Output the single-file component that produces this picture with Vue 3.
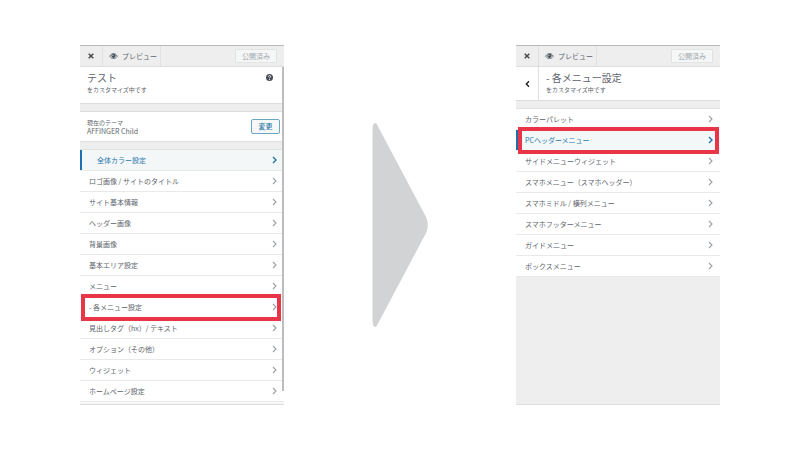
<script setup>
const themeItems = [
  { label: '全体カラー設定', active: true, indent: true },
  { label: 'ロゴ画像 / サイトのタイトル' },
  { label: 'サイト基本情報' },
  { label: 'ヘッダー画像' },
  { label: '背景画像' },
  { label: '基本エリア設定' },
  { label: 'メニュー' },
  { label: '- 各メニュー設定', marked: true },
  { label: '見出しタグ（hx）/ テキスト' },
  { label: 'オプション（その他）' },
  { label: 'ウィジェット' },
  { label: 'ホームページ設定' },
]

const menuItems = [
  { label: 'カラーパレット' },
  { label: 'PCヘッダーメニュー', active: true, marked: true },
  { label: 'サイドメニューウィジェット' },
  { label: 'スマホメニュー（スマホヘッダー）' },
  { label: 'スマホミドル / 横列メニュー' },
  { label: 'スマホフッターメニュー' },
  { label: 'ガイドメニュー' },
  { label: 'ボックスメニュー' },
]

const panels = [
  { id: 'theme', title: 'テスト', items: themeItems, root: true },
  { id: 'menus', title: '- 各メニュー設定', items: menuItems, root: false },
]
</script>

<template>
  <main class="page">
    <section v-for="panel in panels" :key="panel.id" class="panel" :class="panel.id">
      <header class="toolbar">
        <button type="button" class="close" aria-label="閉じる">
          <svg viewBox="0 0 6 6" width="6" height="6"><path d="M.7.7 5.300 5.300M5.300.7.7 5.300" /></svg>
        </button>
        <button type="button" class="preview">
          <svg viewBox="0 0 20 14" width="9" height="6">
            <path class="lid" d="M1 7.500C4 2.800 7 1.200 10 1.200s6 1.600 9 6.300C16 11.600 13 13 10 13S4 11.600 1 7.500Z" />
            <circle class="iris" cx="10" cy="6.500" r="5" />
            <circle class="glint" cx="8.500" cy="5" r="1.600" />
          </svg>
          プレビュー
        </button>
        <button type="button" class="publish" disabled>公開済み</button>
      </header>

      <div class="body">
        <div class="heading">
          <button v-if="!panel.root" type="button" class="back" aria-label="戻る">
            <svg viewBox="0 0 5 8" width="5" height="8"><path d="M4 1.200 1.300 4 4 6.800" /></svg>
          </button>
          <div class="titles">
            <h2>{{ panel.title }}</h2>
            <p>をカスタマイズ中です</p>
          </div>
          <button v-if="panel.root" type="button" class="help" aria-label="ヘルプ">
            <svg viewBox="0 0 14 14" width="7" height="7">
              <circle cx="7" cy="7" r="7" />
              <path d="M4.800 5.300C4.800 2.500 9.300 2.500 9.300 5.200 9.300 6.900 7 6.800 7 8.600M7 10v1.700" />
            </svg>
          </button>
        </div>

        <div v-if="panel.root" class="theme-row">
          <p>現在のテーマ<br /><span class="theme-name">AFFINGER Child</span></p>
          <button type="button" class="change">変更</button>
        </div>

        <ul class="list">
          <li v-for="item in panel.items" :key="item.label" :class="{ marked: item.marked }">
            <a href="#" :class="{ active: item.active, indent: item.indent }">
              <span>{{ item.label }}</span>
              <svg viewBox="0 0 5 8" width="5" height="8"><path d="M1 1 4 4 1 7" /></svg>
            </a>
          </li>
        </ul>
      </div>
    </section>

    <svg class="arrow" viewBox="0 0 56 206" width="56" height="206" aria-hidden="true">
      <path d="M.5 10C.5 3 1.500 1 3 1c1 0 1.600.8 2.500 2.400L53.500 94c3 6 3 12 0 18L5.500 202.600C4.600 204.200 4 205 3 205 1.500 205 .5 203 .5 196Z" />
    </svg>
  </main>
</template>

<style>
body {
  margin: 0;
  background: #fff;
}
</style>

<style scoped>
.page {
  display: grid;
  grid-template-columns: 204fr 232fr 204fr;
  grid-template-areas: "first arrow second";
  padding: 45px 10%;
  color: #5c636b;
  font-family: "Noto Sans CJK JP", "Noto Sans", sans-serif;
  font-size: 7px;
  line-height: 9px;
}

.panel {
  display: flex;
  flex-direction: column;
  min-width: 0;
  background: #eee;
  border-top: 1px solid #b8b8b8;
  border-bottom: 1px solid #ddd;
}

.theme {
  grid-area: first;
}

.menus {
  grid-area: second;
}

.arrow {
  grid-area: arrow;
  align-self: center;
  margin-left: 88px;
  fill: #d1d3d4;
}

button {
  box-sizing: border-box;
  margin: 0;
  padding: 0;
  border: 0;
  background: none;
  color: inherit;
  font: inherit;
}

h2,
p,
ul {
  margin: 0;
  padding: 0;
  font-weight: 400;
}

svg {
  display: block;
  flex: none;
}

.toolbar {
  display: flex;
  align-items: stretch;
  height: 20px;
  border-bottom: 1px solid #ddd;
}

.close {
  display: flex;
  align-items: center;
  justify-content: center;
  width: 23px;
  border-right: 1px solid #e0e0e0;
}

.close svg {
  fill: none;
  stroke: #444;
  stroke-width: 1.4;
}

.preview {
  display: flex;
  align-items: center;
  gap: 4px;
  padding: 0 3px 0 6px;
  border-right: 1px solid #e2e2e2;
}

.lid {
  fill: #eee;
  stroke: #555d66;
  stroke-width: 2;
}

.iris {
  fill: #444c54;
}

.glint {
  fill: #ddd;
}

.publish {
  align-self: center;
  height: 14px;
  margin-left: auto;
  margin-right: 7px;
  padding: 0 6px;
  border: 1px solid #e2e4e4;
  border-radius: 1px;
  background: #f5f6f6;
  color: #a5aaaf;
}

.body {
  position: relative;
}

.theme .body {
  padding-bottom: 2px;
  background: linear-gradient(#f8f8f8, #f8f8f8) bottom / 100% 2px no-repeat;
}

.theme .body::after {
  content: "";
  position: absolute;
  top: 0;
  right: 0;
  bottom: 13px;
  width: 2px;
  background: #bdbdbd;
}

.menus .body {
  flex: 1;
}

.heading {
  display: flex;
  border-bottom: 1px solid #ddd;
  background: #fff;
}

.theme .heading {
  height: 36px;
}

.menus .heading {
  height: 33px;
}

.titles {
  flex: 1;
  padding: 5px 7px;
}

h2 {
  font-size: 10px;
  line-height: 12px;
}

.titles p {
  font-size: 6px;
  line-height: 12px;
}

.back {
  display: flex;
  align-items: center;
  justify-content: center;
  width: 23px;
  border-right: 1px solid #e0e0e0;
}

.back svg {
  fill: none;
  stroke: #222;
  stroke-width: 1.4;
}

.help {
  align-self: flex-start;
  padding: 7px 11px;
}

.help circle {
  fill: #484f57;
}

.help path {
  fill: none;
  stroke: #fff;
  stroke-width: 1.8;
}

.theme-row {
  display: flex;
  align-items: center;
  justify-content: space-between;
  height: 29px;
  margin-top: 7px;
  padding: 0 4px 0 7px;
  border-top: 1px solid #ddd;
  border-bottom: 1px solid #ddd;
  background: #fff;
}

.theme-row p {
  font-size: 6px;
}

.theme-name {
  font-size: 7px;
}

.change {
  width: 29px;
  height: 15px;
  border: 1px solid #6ba6c4;
  border-radius: 2px;
  background: #f6f8f8;
  color: #2273a5;
  font-weight: 500;
}

.list {
  list-style: none;
  margin-top: 7px;
  border-top: 1px solid #e2e2e2;
  background: #fff;
}

.list li {
  position: relative;
  border-bottom: 1px solid #e9e9e9;
}

.list a {
  display: flex;
  align-items: center;
  justify-content: space-between;
  height: 20px;
  padding: 0 7px 0 9px;
  color: inherit;
  text-decoration: none;
}

.list a.active {
  padding-left: 7px;
  border-left: 2px solid #1d6fae;
  background: #f4f7f7;
  color: #2878ad;
}

.list a.indent {
  padding-left: 15px;
}

.list svg {
  fill: none;
  stroke: #9a9fa4;
  stroke-width: 1.1;
}

.list a.active svg {
  stroke: #1d6fae;
  stroke-width: 1.4;
}

.marked::after {
  content: "";
  position: absolute;
  inset: -3px 3px -4px 1px;
  border: 4px solid #e83648;
}

.menus .marked::after {
  right: 1px;
  left: 2px;
}
</style>
